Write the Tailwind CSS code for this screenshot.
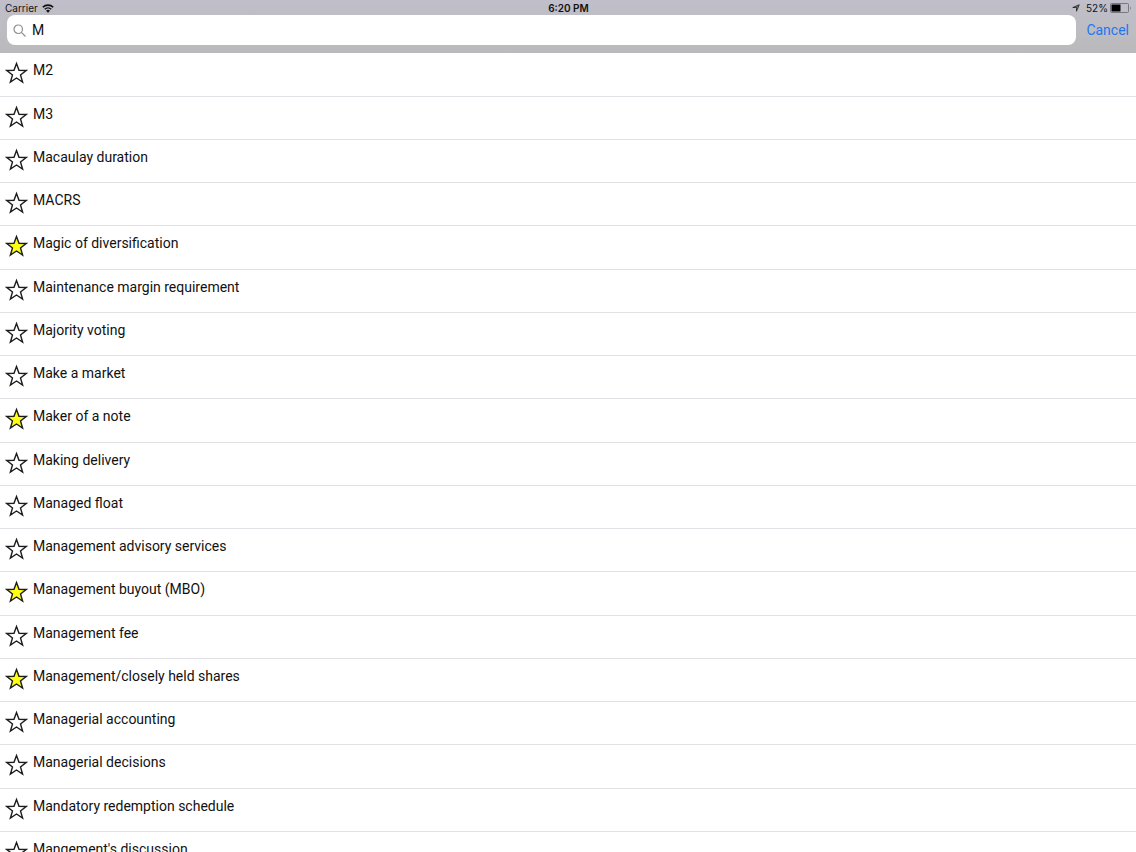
<!DOCTYPE html>
<html lang="en">
<head>
    <meta charset="UTF-8">
    <meta name="viewport" content="width=device-width, initial-scale=1.0">
    <title>Glossary Search</title>
    <script src="https://cdn.jsdelivr.net/npm/@tailwindcss/browser@4"></script>
</head>
<body class="h-screen flex flex-col overflow-hidden bg-white text-[#111] font-[Roboto,sans-serif]">

    <header class="bg-linear-to-b from-[#c0bfca] to-[#bababc] shrink-0">
        <!-- Status bar -->
        <div class="grid grid-cols-3 items-center h-[15px] pl-[5px] pr-1 text-[10px] leading-4 font-['Inter',sans-serif]">
            <div class="flex items-center gap-1">
                <span>Carrier</span>
                <svg class="w-3 h-[9px]" viewBox="0 0 24 18" aria-hidden="true">
                    <path d="M1.500 6.500a15 15 0 0 1 21 0M5.500 10.500a9.300 9.300 0 0 1 13 0" fill="none" stroke="#111" stroke-width="3.200"/>
                    <path d="M12 17.500l-4-4.200a6 6 0 0 1 8 0z" fill="#111"/>
                </svg>
            </div>
            <time class="text-center font-semibold">6:20 PM</time>
            <div class="flex items-center justify-end">
                <svg class="w-2 h-2 mr-1.5" viewBox="0 0 16 16" aria-hidden="true">
                    <path d="M14.500 1.500L9 14.500V7H1.500z" fill="#777" stroke="#222" stroke-width="1.600" stroke-linejoin="round"/>
                </svg>
                <span class="mr-0.5">52%</span>
                <svg class="w-[22px] h-[10px]" viewBox="0 0 22 10" aria-hidden="true">
                    <rect x="0.500" y="0.500" width="18" height="9" rx="1" fill="none" stroke="#77777d"/>
                    <rect x="1.500" y="1.500" width="9" height="7" fill="#000"/>
                    <path d="M20 3.500a2 2 0 0 1 0 3.200z" fill="#77777d"/>
                </svg>
            </div>
        </div>

        <!-- Search bar -->
        <form class="flex items-start h-[38px] px-[7px]" onsubmit="return false">
            <label for="search" class="flex flex-1 items-center gap-1.5 h-[30px] pl-1.5 bg-white rounded-lg">
                <svg class="w-[13px] h-[13px]" viewBox="0 0 26 26" fill="none" stroke="#8e8e93" stroke-width="2.400" aria-hidden="true">
                    <circle cx="10.500" cy="10.500" r="8.500"/>
                    <path d="M16.800 16.800L25 25"/>
                </svg>
                <input id="search" type="text" value="M" aria-label="Search" class="flex-1 min-w-0 text-sm leading-5 bg-transparent outline-none">
            </label>
            <button type="button" id="cancel" class="ml-[10px] h-[30px] text-sm text-[#2277f0]">Cancel</button>
        </form>
    </header>

    <!-- Results -->
    <main class="flex-1 min-h-0 overflow-y-auto [scrollbar-width:none]">
        <ul id="results"></ul>
    </main>

    <template id="row">
        <li class="flex items-start gap-[5px] h-[43px] nth-[4n+1]:h-11 pl-[5px] border-b border-[#e2e1e5]">
            <button type="button" aria-label="Favorite" aria-pressed="false" class="group mt-[7px] shrink-0">
                <svg class="block w-[23px] h-6 fill-white group-aria-pressed:fill-[#ffff14]" viewBox="0 0 23 24">
                    <path d="M11.500 3.500L14 10.300L21.200 10.500L15.500 15L17.600 22L11.500 18L5.400 22L7.500 15L1.800 10.500L9 10.300Z" stroke="#1c1c1c" stroke-width="1.400"/>
                </svg>
            </button>
            <span class="pt-[7px] text-sm leading-5"></span>
        </li>
    </template>

    <script>
        const terms = [
            { name: "M2" },
            { name: "M3" },
            { name: "Macaulay duration" },
            { name: "MACRS" },
            { name: "Magic of diversification", starred: true },
            { name: "Maintenance margin requirement" },
            { name: "Majority voting" },
            { name: "Make a market" },
            { name: "Maker of a note", starred: true },
            { name: "Making delivery" },
            { name: "Managed float" },
            { name: "Management advisory services" },
            { name: "Management buyout (MBO)", starred: true },
            { name: "Management fee" },
            { name: "Management/closely held shares", starred: true },
            { name: "Managerial accounting" },
            { name: "Managerial decisions" },
            { name: "Mandatory redemption schedule" },
            { name: "Mangement's discussion" }
        ];
        const search = document.getElementById("search");
        const results = document.getElementById("results");
        const row = document.getElementById("row");

        function render() {
            results.innerHTML = "";
            const query = search.value.toLowerCase();
            terms.filter(term => term.name.toLowerCase().startsWith(query)).forEach(term => {
                const item = row.content.cloneNode(true);
                const star = item.querySelector("button");
                item.querySelector("span").textContent = term.name;
                star.setAttribute("aria-pressed", !!term.starred);
                star.addEventListener("click", () => {
                    term.starred = !term.starred;
                    star.setAttribute("aria-pressed", term.starred);
                });
                results.appendChild(item);
            });
        }

        search.addEventListener("input", render);
        document.getElementById("cancel").addEventListener("click", () => {
            search.value = "";
            render();
        });
        render();
    </script>

</body>
</html>
